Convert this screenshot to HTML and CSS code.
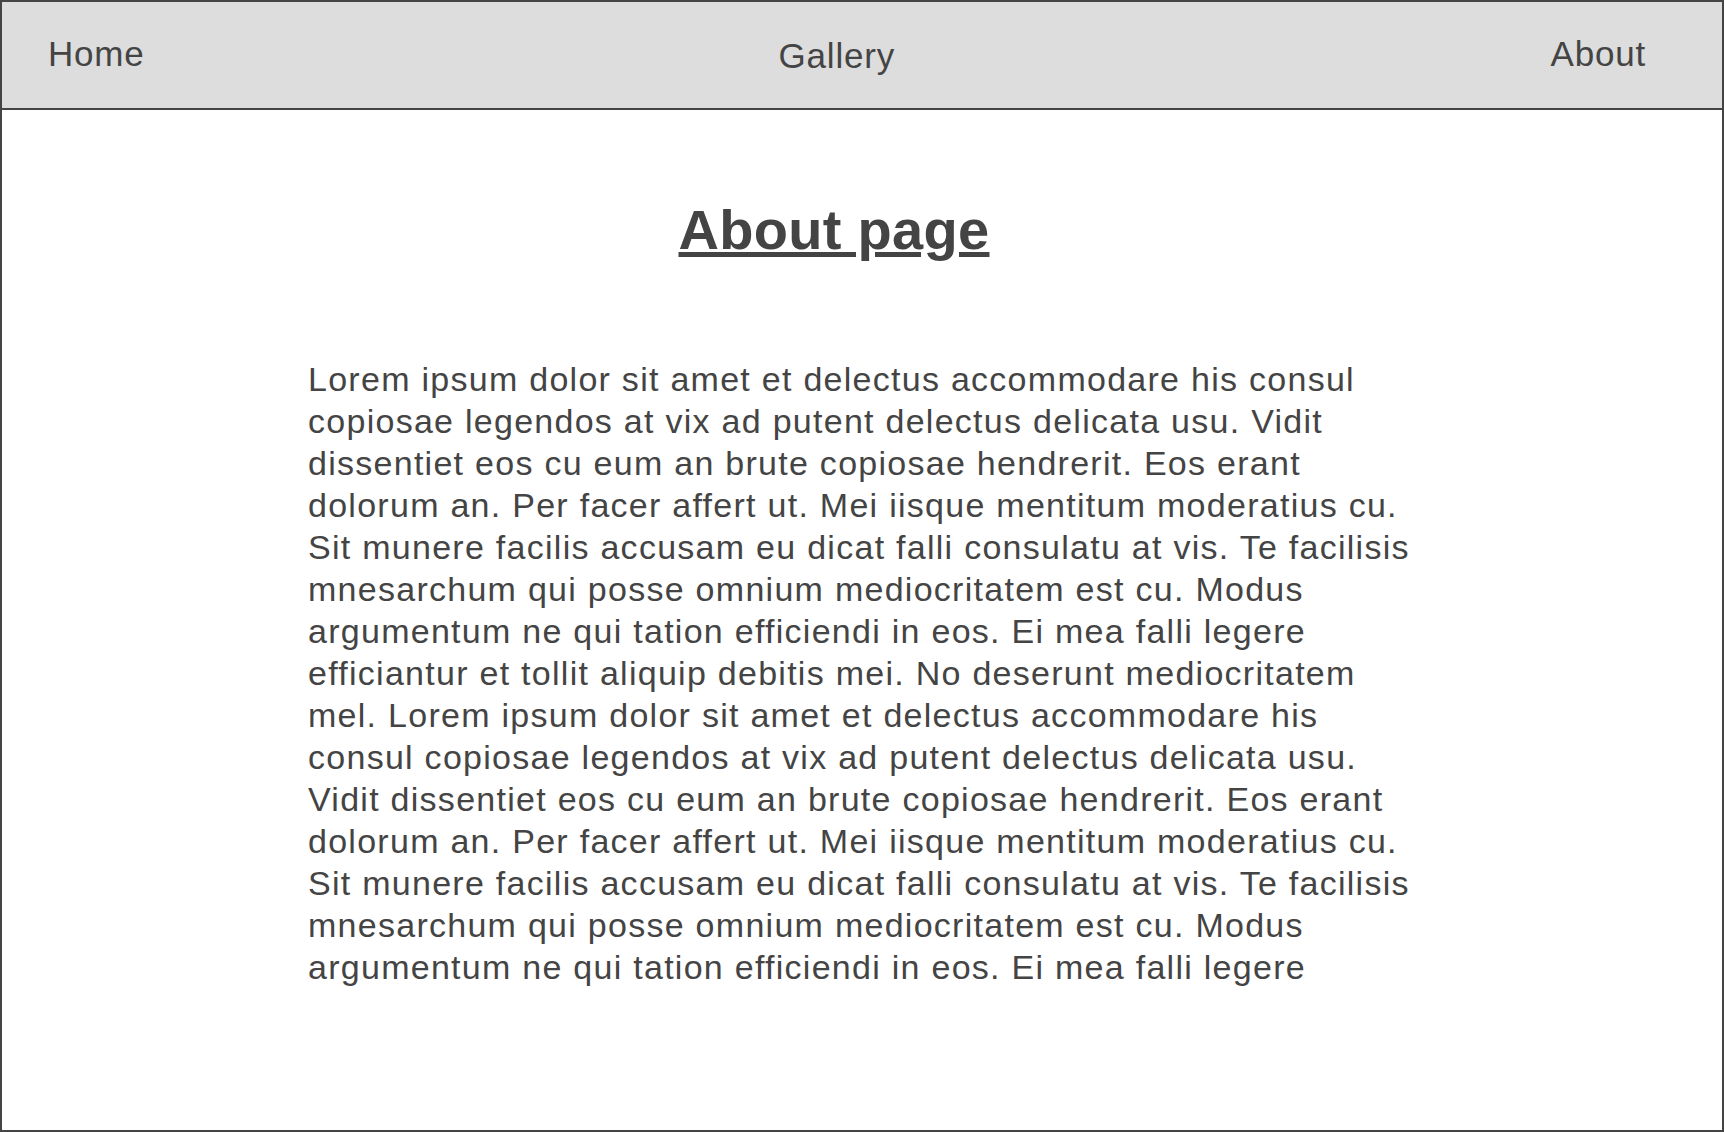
FILE: index.html
```html
<!DOCTYPE html>
<html lang="en">
<head>
<meta charset="utf-8">
<title>About page</title>
<link rel="stylesheet" href="styles.css">
</head>
<body>
<div class="frame">
  <nav class="nav">
    <a class="nav-link nav-home" href="#">Home</a>
    <a class="nav-link nav-gallery" href="#">Gallery</a>
    <a class="nav-link nav-about" href="#">About</a>
  </nav>
  <main class="main">
    <h1 class="title">About page</h1>
    <p class="body-text">Lorem ipsum dolor sit amet et delectus accommodare his consul copiosae legendos at vix ad putent delectus delicata usu. Vidit dissentiet eos cu eum an brute copiosae hendrerit. Eos erant dolorum an. Per facer affert ut. Mei iisque mentitum moderatius cu. Sit munere facilis accusam eu dicat falli consulatu at vis. Te facilisis mnesarchum qui posse omnium mediocritatem est cu. Modus argumentum ne qui tation efficiendi in eos. Ei mea falli legere efficiantur et tollit aliquip debitis mei. No deserunt mediocritatem mel. Lorem ipsum dolor sit amet et delectus accommodare his consul copiosae legendos at vix ad putent delectus delicata usu. Vidit dissentiet eos cu eum an brute copiosae hendrerit. Eos erant dolorum an. Per facer affert ut. Mei iisque mentitum moderatius cu. Sit munere facilis accusam eu dicat falli consulatu at vis. Te facilisis mnesarchum qui posse omnium mediocritatem est cu. Modus argumentum ne qui tation efficiendi in eos. Ei mea falli legere</p>
  </main>
</div>
</body>
</html>
```
FILE: styles.css
```css
html, body {
  margin: 0;
  padding: 0;
  background: #ffffff;
}

.frame {
  box-sizing: border-box;
  width: 1724px;
  height: 1132px;
  border: 2px solid #444444;
  display: flex;
  flex-direction: column;
  font-family: "Liberation Sans", Arial, sans-serif;
  color: #444444;
  overflow: hidden;
}

.nav {
  box-sizing: border-box;
  flex: 0 0 auto;
  height: 108px;
  background: #dddddd;
  border-bottom: 2px solid #444444;
  display: flex;
  align-items: center;
  padding: 0 76px 2px 46px;
}

.nav-link {
  color: #444444;
  text-decoration: none;
  font-size: 35px;
  line-height: 40px;
  letter-spacing: 0.8px;
}

.nav-gallery {
  margin-left: 634px;
  position: relative;
  top: 2px;
}

.nav-about {
  margin-left: auto;
}

.main {
  flex: 1 1 auto;
  display: flex;
  flex-direction: column;
  padding: 88px 0 0 306px;
}

.title {
  margin: 0;
  width: 1052px;
  text-align: center;
  font-size: 56px;
  line-height: 64px;
  font-weight: bold;
  letter-spacing: 0.3px;
  text-decoration: underline;
}

.body-text {
  margin: 96px 0 0 0;
  width: 1112px;
  font-size: 34px;
  line-height: 42px;
  letter-spacing: 1.27px;
}
```
